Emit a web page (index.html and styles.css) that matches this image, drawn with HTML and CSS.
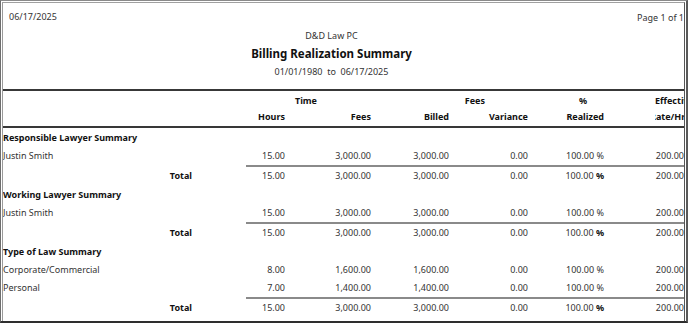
FILE: index.html
```html
<!DOCTYPE html>
<html>
<head>
<meta charset="utf-8">
<link rel="stylesheet" href="styles.css">
</head>
<body>
<div class="viewer">
  <div class="page">
    <div class="head">
      <div class="head-top">
        <span class="date">06/17/2025</span>
        <span class="pageno">Page 1 of 1</span>
      </div>
      <div class="firm">D&amp;D Law PC</div>
      <div class="title">Billing Realization Summary</div>
      <div class="range">01/01/1980&nbsp;&nbsp;to&nbsp;&nbsp;06/17/2025</div>
    </div>
    <div class="report">
      <div class="grid colhead">
        <div class="c1"></div>
        <div class="g-time">Time</div>
        <div class="g-fees">Fees</div>
        <div class="g-pct">%</div>
        <div class="g-eff">Effective</div>
      </div>
      <div class="grid colhead2">
        <div class="c1"></div>
        <div class="num">Hours</div>
        <div class="num">Fees</div>
        <div class="num">Billed</div>
        <div class="num">Variance</div>
        <div class="num">Realized</div>
        <div class="rate"><div class="clip"><span>Rate/Hr</span></div></div>
      </div>

      <div class="section first">Responsible Lawyer Summary</div>
      <div class="grid row">
        <div class="c1">Justin Smith</div>
        <div class="num">15.00</div><div class="num">3,000.00</div><div class="num">3,000.00</div><div class="num">0.00</div><div class="num">100.00 %</div><div class="num">200.00</div>
      </div>
      <div class="sep"></div>
      <div class="grid row total">
        <div class="c1">Total</div>
        <div class="num">15.00</div><div class="num">3,000.00</div><div class="num">3,000.00</div><div class="num">0.00</div><div class="num">100.00 <b>%</b></div><div class="num">200.00</div>
      </div>

      <div class="section">Working Lawyer Summary</div>
      <div class="grid row">
        <div class="c1">Justin Smith</div>
        <div class="num">15.00</div><div class="num">3,000.00</div><div class="num">3,000.00</div><div class="num">0.00</div><div class="num">100.00 %</div><div class="num">200.00</div>
      </div>
      <div class="sep"></div>
      <div class="grid row total">
        <div class="c1">Total</div>
        <div class="num">15.00</div><div class="num">3,000.00</div><div class="num">3,000.00</div><div class="num">0.00</div><div class="num">100.00 <b>%</b></div><div class="num">200.00</div>
      </div>

      <div class="section">Type of Law Summary</div>
      <div class="grid row">
        <div class="c1">Corporate/Commercial</div>
        <div class="num">8.00</div><div class="num">1,600.00</div><div class="num">1,600.00</div><div class="num">0.00</div><div class="num">100.00 %</div><div class="num">200.00</div>
      </div>
      <div class="grid row">
        <div class="c1">Personal</div>
        <div class="num">7.00</div><div class="num">1,400.00</div><div class="num">1,400.00</div><div class="num">0.00</div><div class="num">100.00 %</div><div class="num">200.00</div>
      </div>
      <div class="sep"></div>
      <div class="grid row total">
        <div class="c1">Total</div>
        <div class="num">15.00</div><div class="num">3,000.00</div><div class="num">3,000.00</div><div class="num">0.00</div><div class="num">100.00 <b>%</b></div><div class="num">200.00</div>
      </div>
    </div>
  </div>
</div>
</body>
</html>
```

FILE: styles.css
```css
* { box-sizing: border-box; }
html, body { margin: 0; padding: 0; background: #fff; }
body {
  font-family: "Noto Sans", "Open Sans", sans-serif;
  font-size: 9px;
  color: #333;
}
.viewer {
  width: 688px;
  height: 323px;
  border-left: 1px solid #6e6e6e;
  border-top: 1px solid #8a8a8a;
  border-right: 2px solid #5a5a5a;
  border-bottom: 2px solid #2e2e2e;
  padding: 1px 1px 0 1px;
  overflow: hidden;
}
.page {
  height: 100%;
  border-left: 1px solid #9a9a9a;
  border-top: 1px solid #a0a0a0;
  border-right: 1px solid #555;
  overflow: hidden;
  background: #fff;
}
.head {
  height: 88px;
  border-bottom: 2px solid #383838;
  display: flex;
  flex-direction: column;
  align-items: center;
}
.head-top {
  align-self: stretch;
  display: flex;
  justify-content: space-between;
  height: 26px;
  padding: 8px 0 0 6px;
  line-height: 12px;
}
.pageno { margin-right: 0; padding-top: 1px; white-space: nowrap; }
.firm { margin-left: -24px; line-height: 12px; margin-top: 1px; }
.title {
  margin-left: -24px;
  margin-top: 4px;
  font-size: 11.5px;
  font-weight: bold;
  color: #111;
  line-height: 16px;
}
.range { margin-left: -24px; margin-top: 4px; line-height: 12px; }

.report { width: 690px; }
.grid {
  display: grid;
  grid-template-columns: 193px 93px 86px 78px 79px 76px 80px;
}
.num { text-align: right; padding-right: 4px; white-space: nowrap; }
.colhead, .colhead2 { font-weight: bold; color: #111; }
.colhead { height: 18px; line-height: 16px; padding-top: 2px; }
.g-time { grid-column: 2 / 4; text-align: right; padding-right: 58px; }
.g-fees { grid-column: 4 / 6; text-align: right; padding-right: 47px; }
.g-pct { text-align: right; padding-right: 21px; }
.g-eff { padding-left: 47px; white-space: nowrap; }
.colhead2 {
  height: 19px;
  line-height: 16px;
  border-bottom: 2px solid #383838;
}
.rate { padding-left: 47px; }
.clip { overflow: hidden; white-space: nowrap; }
.clip span { display: inline-block; margin-left: -5px; }

.section {
  font-weight: bold;
  color: #111;
  height: 20px;
  line-height: 20px;
  padding-top: 1px;
}
.section.first { height: 19px; line-height: 18px; }
.row { height: 18px; line-height: 18px; }
.row .c1 { white-space: nowrap; }
.total { height: 17px; line-height: 17px; }
.total .c1 { font-weight: bold; color: #111; text-align: right; padding-right: 4px; }
.total b { color: #111; }
.sep {
  height: 2px;
  margin-left: 243px;
  background: #8a8a8a;
}
```
